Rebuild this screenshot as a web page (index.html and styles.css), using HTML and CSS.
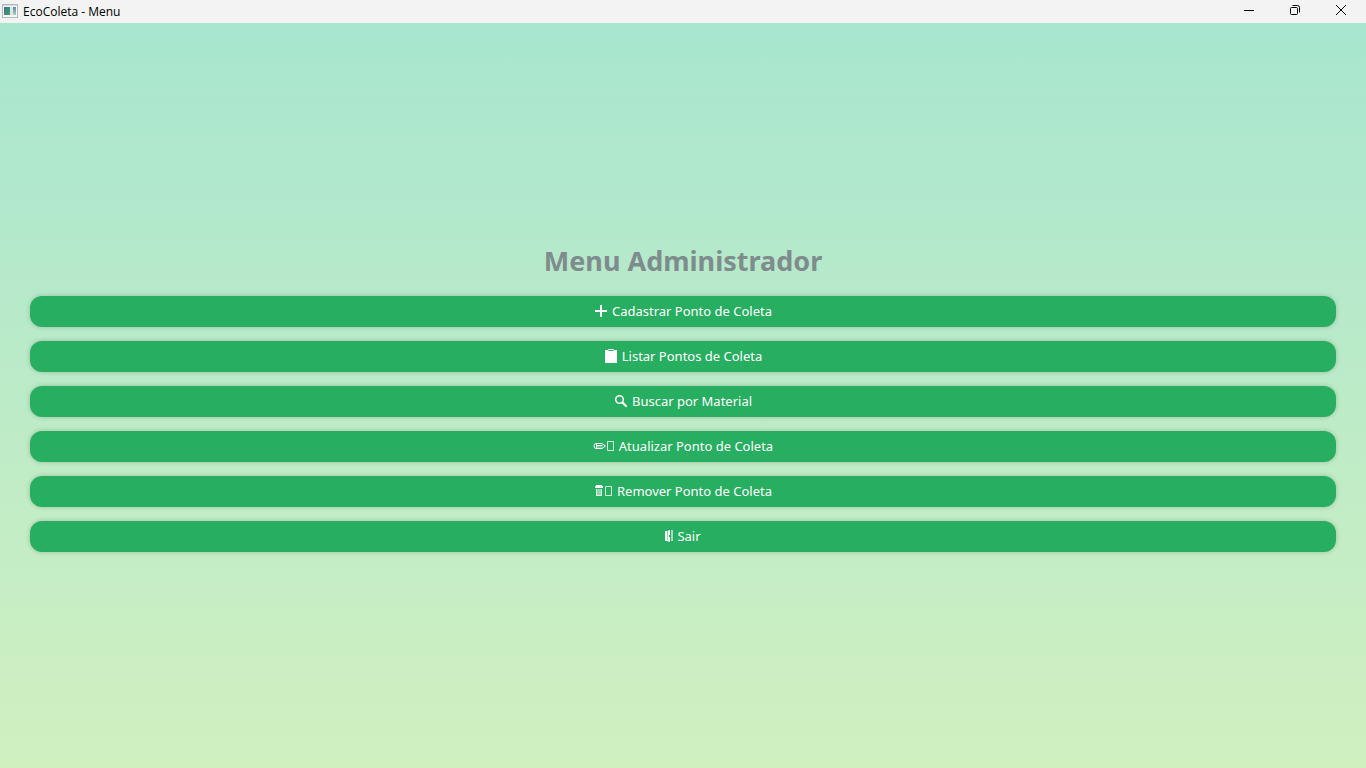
FILE: index.html
```html
<!DOCTYPE html>
<html lang="pt-BR">
<head>
<meta charset="utf-8">
<title>EcoColeta - Menu</title>
<link rel="stylesheet" href="styles.css">
</head>
<body>
<header class="titlebar">
  <svg class="app-icon" width="16" height="14" viewBox="0 0 16 14" aria-hidden="true">
    <defs>
      <linearGradient id="pane" x1="0" y1="0" x2="1" y2="1"><stop offset="0" stop-color="#3f6fa0"/><stop offset="1" stop-color="#45a060"/></linearGradient>
      <linearGradient id="side" x1="0" y1="0" x2="0" y2="1"><stop offset="0" stop-color="#5f88ac"/><stop offset="1" stop-color="#a9d3ad"/></linearGradient>
    </defs>
    <rect x=".5" y=".5" width="15" height="13" fill="#f4f6f8" stroke="#b4b8bc"/>
    <path d="M1 1.500h14" stroke="#d5dade"/>
    <rect x="2" y="3" width="6" height="8" fill="url(#pane)"/>
    <rect x="8" y="3" width="3" height="8" fill="#dfe5e8"/>
    <rect x="11" y="3" width="3" height="8" fill="url(#side)"/>
  </svg>
  <span class="app-name">EcoColeta - Menu</span>
  <div class="window-controls">
    <button class="window-button" type="button" aria-label="Minimizar"><svg width="12" height="12" viewBox="0 0 12 12"><path d="M1 6.500h10"/></svg></button>
    <button class="window-button" type="button" aria-label="Restaurar"><svg width="12" height="12" viewBox="0 0 12 12"><rect x="1.500" y="3.500" width="7" height="7" rx="1"/><path d="M3.500 1.500h5a2 2 0 0 1 2 2v5"/></svg></button>
    <button class="window-button" type="button" aria-label="Fechar"><svg width="12" height="12" viewBox="0 0 12 12"><path d="M1 1l10 10M11 1L1 11"/></svg></button>
  </div>
</header>
<main class="menu">
  <h1 class="menu-title">Menu Administrador</h1>
  <button class="menu-button" type="button">
    <svg width="14" height="14" viewBox="0 0 14 14" aria-hidden="true"><path d="M7 1v12M1 7h12" stroke="currentColor" stroke-width="2"/></svg>
    <span>Cadastrar Ponto de Coleta</span>
  </button>
  <button class="menu-button" type="button">
    <svg width="14" height="14" viewBox="0 0 14 14" aria-hidden="true"><path d="M1 1h3v1h6V1h3v13H1z" fill="currentColor"/><path d="M4.500 1.500V.5h5v1" fill="none" stroke="currentColor"/></svg>
    <span>Listar Pontos de Coleta</span>
  </button>
  <button class="menu-button" type="button">
    <svg width="14" height="14" viewBox="0 0 14 14" aria-hidden="true"><circle cx="5.500" cy="5.500" r="3.800" fill="none" stroke="currentColor" stroke-width="1.500"/><path d="M8.500 8.500L12 12" stroke="currentColor" stroke-width="2.200" stroke-linecap="round"/></svg>
    <span>Buscar por Material</span>
  </button>
  <button class="menu-button" type="button">
    <svg width="22" height="14" viewBox="0 0 22 14" aria-hidden="true"><g fill="none" stroke="currentColor"><path d="M1 7Q1 4.500 3 4.500h6l3.500 2.500L9 9.500H3Q1 9.500 1 7zM3.500 4.500v5M3.500 6.500h6"/><path d="M3.500 8h6" opacity=".6"/><path d="M14.500 2.500h6v9h-6z" stroke-width=".8"/></g></svg>
    <span>Atualizar Ponto de Coleta</span>
  </button>
  <button class="menu-button" type="button">
    <svg width="19" height="14" viewBox="0 0 19 14" aria-hidden="true"><path d="M2 1h6v1h1v2H1V2h1z" fill="currentColor"/><path d="M2 5h6v7H2z" fill="currentColor" opacity=".5"/><path d="M2.500 5v6.500h5V5" fill="none" stroke="currentColor" stroke-width=".7"/><path d="M11.500 2.500h6v9h-6z" fill="none" stroke="currentColor" stroke-width=".8"/></svg>
    <span>Remover Ponto de Coleta</span>
  </button>
  <button class="menu-button" type="button">
    <svg width="8" height="14" viewBox="0 0 8 14" aria-hidden="true"><path d="M0 2h2v10H0zM2 2l3-1v12l-3-1z" fill="currentColor"/><path d="M2.500 2v9" stroke="#27ae60" opacity=".5"/><path d="M4.500 6v2" stroke="#27ae60"/><path d="M7 1v11" stroke="currentColor" stroke-width="1.500" opacity=".8"/></svg>
    <span>Sair</span>
  </button>
</main>
</body>
</html>
```
FILE: styles.css
```css
* {
  box-sizing: border-box;
}

body {
  margin: 0;
  min-height: 100vh;
  display: flex;
  flex-direction: column;
  font-family: "Noto Sans", "Open Sans", sans-serif;
}

.titlebar {
  display: flex;
  align-items: center;
  height: 23px;
  padding-left: 2px;
  background: #f3f3f3;
  color: #000;
}

.app-icon {
  margin-bottom: 1px;
}

.app-name {
  margin-left: 5px;
  font-family: "Open Sans", sans-serif;
  font-size: 12px;
  line-height: 22px;
}

.window-controls {
  display: flex;
  align-self: stretch;
  margin-left: auto;
  padding-right: 2px;
}

.window-button {
  display: flex;
  align-items: center;
  justify-content: center;
  width: 46px;
  height: 20px;
  padding: 0;
  border: 0;
  background: transparent;
}

.window-button svg {
  fill: none;
  stroke: #000;
  stroke-width: 1;
}

.menu {
  flex: 1;
  display: flex;
  flex-direction: column;
  justify-content: center;
  gap: 14px;
  padding: 30px;
  background: linear-gradient(#a8e6cf, #d0f0c0);
}

.menu-title {
  margin: 0;
  color: #7f8c8d;
  font-size: 27px;
  font-weight: 700;
  line-height: 42px;
  text-align: center;
}

.menu-button {
  display: flex;
  align-items: center;
  justify-content: center;
  gap: 4px;
  height: 31px;
  padding: 0;
  border: 0;
  border-radius: 12px;
  background: #27ae60;
  box-shadow: 0 0 5px rgba(0, 0, 0, 0.2);
  color: #fff;
  font-family: inherit;
  font-size: 13px;
  line-height: 20px;
}
```
